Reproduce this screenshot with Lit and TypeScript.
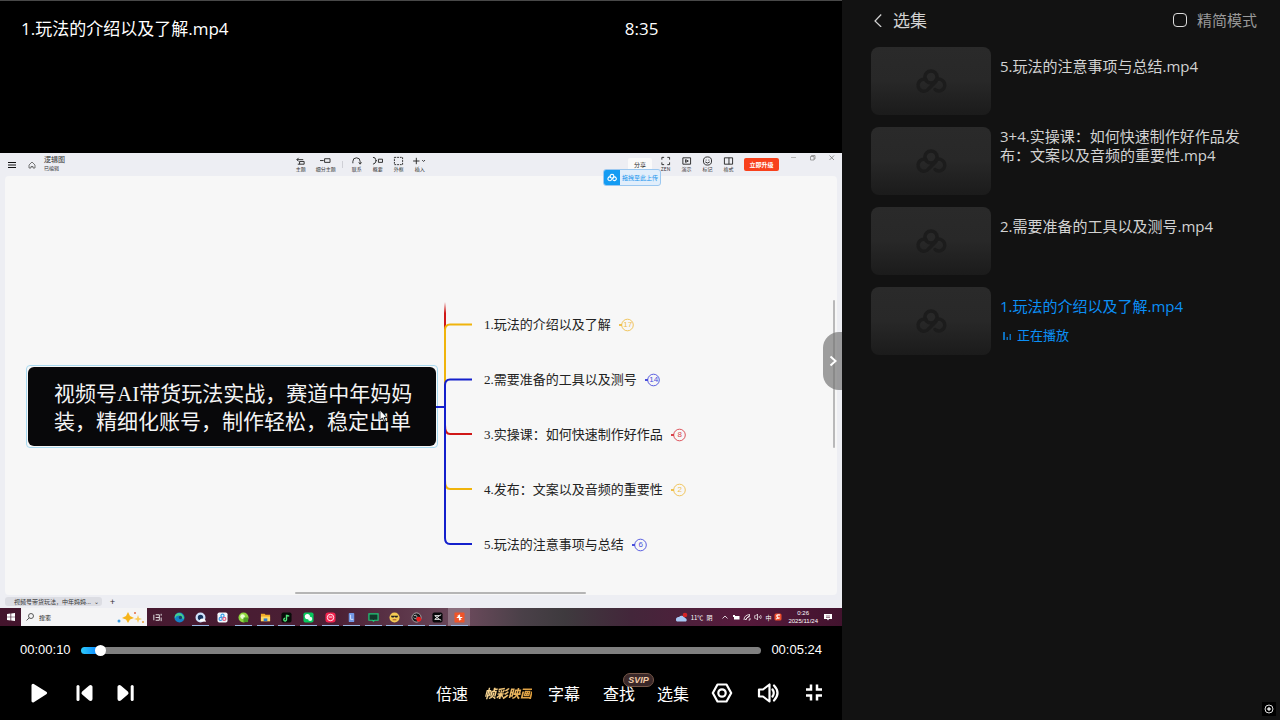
import { LitElement, html, css, svg } from "lit";
import { customElement, state } from "lit/decorators.js";
import { classMap } from "lit/directives/class-map.js";

const cloudLogo = (cls: string) => html`
  <svg class=${cls} viewBox="0 0 32 26" fill="none" stroke="currentColor" stroke-width="3.5" stroke-linecap="round" aria-hidden="true">
    <circle cx="16" cy="9" r="6.1" />
    <path d="M21 13.500 13.500 21A5.900 5.900 0 1 1 11 11.700" />
    <path d="M21.300 11.700A5.900 5.900 0 1 1 20 21.500" />
  </svg>`;

@customElement("mind-map")
class MindMap extends LitElement {
  static styles = css`
    :host { display: block; position: relative; flex: 1; margin: 0 5px; background: #f7f7f7; border-radius: 4px; overflow: hidden;
      color: #222; font-family: "Liberation Serif", "Noto Sans CJK SC", sans-serif; }
    .root { position: absolute; left: 21px; top: 189px; width: 412px; height: 83px; box-sizing: border-box; border: 1px solid #a9daf0; border-radius: 4px; padding: 1px; }
    .root p { margin: 0; height: 100%; box-sizing: border-box; display: flex; flex-direction: column; justify-content: center; background: #08080a; border-radius: 6px; padding: 3px 0 0 26px; color: #f4f4f4; font-size: 21px; line-height: 28px; white-space: nowrap; }
    .lines { position: absolute; left: 431px; top: 124px; width: 40px; height: 250px; }
    .topics { position: absolute; left: 479px; top: 139px; margin: 0; padding: 0; list-style: none; display: grid; gap: 35px; }
    .topic { display: flex; align-items: center; gap: 8px; height: 20px; font-size: 13px; line-height: 20px; white-space: nowrap; }
    .badge { position: relative; width: 15px; height: 14px; font: 8px/14px "Liberation Sans", sans-serif; color: var(--c); }
    .badge svg { position: absolute; inset: 0; }
    .badge span { display: block; padding-left: 3px; text-align: center; }
    .gold { --c: #efc04e; } .blue { --c: #4a4fdc; } .red { --c: #d9434c; }
    .vbar { position: absolute; right: 2px; top: 124px; width: 2px; height: 148px; border-radius: 1px; background: #b9b9ba; }
    .hbar { position: absolute; left: 290px; bottom: 1px; width: 291px; height: 2px; border-radius: 1px; background: #b5b5b5; }
    .cursor { position: absolute; left: 374px; top: 233px; width: 9px; height: 14px; }
  `;
  topics = [
    ["1.玩法的介绍以及了解", "17", "gold"],
    ["2.需要准备的工具以及测号", "14", "blue"],
    ["3.实操课：如何快速制作好作品", "8", "red"],
    ["4.发布：文案以及音频的重要性", "2", "gold"],
    ["5.玩法的注意事项与总结", "6", "blue"],
  ];
  render() {
    return html`
      <div class="root"><p><span>视频号AI带货玩法实战，赛道中年妈妈</span><span>装，精细化账号，制作轻松，稳定出单</span></p></div>
      <svg class="lines" viewBox="0 0 40 250" fill="none" stroke-width="2" aria-hidden="true">
        <defs><linearGradient id="f" x1="0" y1="0" x2="0" y2="1"><stop offset="0" stop-color="#d01818" stop-opacity="0" /><stop offset=".4" stop-color="#d01818" /></linearGradient></defs>
        <rect x="8" y="2" width="2" height="28" fill="url(#f)" />
        <path stroke="#f0b40c" d="M9 106V30Q9 24.500 14 24.500H36M9 180Q9 189 14 189H36" />
        <path stroke="#d01818" d="M9 125Q9 134 14 134H36" />
        <path stroke="#1420cc" d="M0 107H9M36 79.500H14Q9 79.500 9 85V238Q9 244 14 244H36" />
      </svg>
      <ul class="topics">
        ${this.topics.map(([t, n, c]) => html`<li class="topic"><span>${t}</span>
          <span class="badge ${c}"><svg viewBox="0 0 15 14" fill="none" stroke="currentColor" aria-hidden="true"><circle cx="8.500" cy="7" r="5.800" stroke-width=".9" /><path d="M0 7H3" stroke-width="2" /></svg><span>${n}</span></span></li>`)}
      </ul>
      <svg class="cursor" viewBox="0 0 9 14" aria-hidden="true"><path d="M1 1V11L3.500 9 5 12.500 6.500 12 5 8.500H8Z" fill="#fff" stroke="#111" stroke-width=".8" /></svg>
      <div class="vbar"></div><div class="hbar"></div>`;
  }
}

const tools: Record<string, unknown> = {
  topic: svg`<path d="M4 2 2 4 4 6M2 4H9M3 9H10V6H5V9"/>`,
  sub: svg`<path d="M0 5H4M5 3H11V7H5Z"/>`,
  link: svg`<path d="M2 8V6A4 4 0 0 1 10 6V8M8.500 7 10 9 11.500 7"/>`,
  sum: svg`<path d="M1 1.500Q4 1.500 4 4T5 5Q4 5 4 6.500T1 9M7 3.500H11.500V7H7Z"/>`,
  frame: svg`<rect x="1.500" y="1.500" width="9" height="8" stroke-dasharray="2 1"/>`,
  plus: svg`<path d="M-1 5.500H6M2.500 2V9M9 4.500 10.500 6 12 4.500"/>`,
  zen: svg`<path d="M2 4V1.500H4.500M8 1.500H10.500V4M10.500 7V9.500H8M4.500 9.500H2V7"/>`,
  show: svg`<path d="M2 2H10.500V9H2ZM5 4V7L8 5.500Z"/>`,
  mark: svg`<circle cx="6" cy="5.500" r="4.500"/><path d="M4 4.500H5M7 4.500H8M3.500 6.500Q6 9 8.500 6.500"/>`,
  format: svg`<path d="M1.500 2H10.500V9H1.500ZM6.500 2V9"/>`,
};

@customElement("desktop-screen")
class DesktopScreen extends LitElement {
  static styles = css`
    :host { display: flex; flex-direction: column; position: relative; background: #edeef3; color: #333; font-family: "Noto Sans CJK SC", sans-serif; }
    .bar { display: flex; height: 23px; flex: none; }
    .doc { width: 34%; display: flex; align-items: center; padding-left: 8px; box-sizing: border-box; gap: 12px; }
    .doc svg { width: 8px; height: 8px; }
    .doc div { display: grid; font-size: 5px; line-height: 8px; padding-bottom: 2px; margin-left: -4px; }
    .doc strong { font-size: 7px; font-weight: 400; line-height: 9px; }
    .mid { flex: 1; display: flex; padding-left: 4px; }
    .tool { width: 21px; display: flex; flex-direction: column; align-items: center; padding-top: 3px; font-size: 5px; line-height: 6px; white-space: nowrap; }
    .tool svg { width: 11px; height: 10px; overflow: visible; }
    .wide { width: 29px; }
    .sep { width: 1px; height: 7px; margin: 8px 3px 0 2px; background: #cfd0d6; }
    .right { display: flex; padding-right: 1px; }
    .share, .up { margin: 5px 3px 0 0; width: 24px; height: 13px; border: 0; border-radius: 2px; padding: 0; background: #fafafa; color: #222; font: 6px/13px "Noto Sans CJK SC", sans-serif; }
    .up { width: 35px; margin: 5px 5px 0; background: #f8411c; color: #fff; font-weight: 700; }
    .win { width: 19px; height: 9px; }
    .drop { position: absolute; left: 603px; top: 16px; width: 58px; height: 17px; box-sizing: border-box; border: 1px solid #9cc8f0; border-radius: 3px; display: flex; align-items: center; background: #e1eefb; color: #1a95ee; font-size: 6px; overflow: hidden; white-space: nowrap; gap: 2px; }
    .drop span { display: grid; place-items: center; width: 16px; height: 17px; background: #149cf3; color: #fff; }
    .cloud { width: 10px; height: 9px; }
    .tabs { height: 13px; flex: none; display: flex; align-items: center; padding-left: 5px; font-size: 6px; gap: 8px; }
    .tab { width: 85px; height: 9px; line-height: 9px; padding: 0 3px 0 9px; background: #dcdde3; border-radius: 3px; display: flex; justify-content: space-between; white-space: nowrap; }
    .tabs i { font-style: normal; font-size: 9px; }
    .task { height: 18px; flex: none; display: flex; background: linear-gradient(90deg, #43142c, #4b2035 40%, #6c4a5c 55%, #4a4048 62%, #3e3a3e 67%, #43263a 75%, #571a3c 88%, #42132e); color: #fff; }
    .start { width: 21px; display: grid; place-items: center; }
    .start svg { width: 8px; height: 8px; }
    .search { width: 126px; background: #f4f4f5; color: #222; display: flex; align-items: center; font-size: 6px; gap: 5px; padding: 0 2px 0 5px; box-sizing: border-box; }
    .search svg { width: 8px; height: 8px; }
    .search .spark { width: 28px; height: 13px; margin-left: auto; }
    .apps { width: 323px; display: flex; }
    .app { flex: 1; display: grid; place-items: center; }
    .app svg { width: 11px; height: 11px; }
    .open { background: linear-gradient(#9bb9e4, #9bb9e4) bottom / 17px 1px no-repeat; }
    .active { background-color: #8b6f7e; }
    .tray { flex: 1; display: flex; justify-content: flex-end; align-items: center; gap: 3px; font-size: 6px; padding-right: 10px; white-space: nowrap; }
    .tray svg { width: 8px; height: 8px; }
    .tray .weather { width: 12px; height: 11px; }
    .date { display: grid; font-size: 6px; line-height: 8px; text-align: center; margin: 0 3px; font-family: "Liberation Sans", sans-serif; }
    .gap { width: 3px; }
  `;
  tool(icon: string, label: string, cls = "") {
    return html`<span class="tool ${cls}"><svg viewBox="0 0 12 11" fill="none" stroke="#222" stroke-width="1">${tools[icon]}</svg>${label}</span>`;
  }
  apps = [
    svg`<path d="M2 3V9M4 3H8V9H4M4 6H8M10 2V4M10 6V10" stroke="#eee" fill="none"/>`,
    svg`<circle cx="6" cy="6" r="5.500" fill="#1482c8"/><path d="M1 7Q3 2 8 5Q8 8 11 7Q10 1 5 1Q0 2 1 7" fill="#45d08d"/><circle cx="7" cy="6" r="1.800" fill="#15436d"/>`,
    svg`<circle cx="6" cy="6" r="4.200" fill="#16355f" stroke="#cfe2fb" stroke-width="2.500"/><path d="M5 10Q5 7 8 7T12 10.500Z" fill="#fff"/>`,
    svg`<rect x=".5" y=".5" width="11" height="11" rx="2" fill="#f4f8fc"/><g fill="none" stroke="#3a9ee8" stroke-width="1.300"><circle cx="6" cy="4" r="1.700"/><circle cx="4" cy="7.500" r="1.700"/><circle cx="8" cy="7.500" r="1.700" stroke="#e26284"/></g>`,
    svg`<circle cx="6" cy="6" r="5.500" fill="#8fd63e"/><circle cx="5" cy="5" r="2.500" fill="#eaffd0"/><rect x="6" y="6" width="5" height="5" fill="#4d9d26"/>`,
    svg`<path d="M1 2H5L6 3H11V10H1Z" fill="#f3ad27"/><path d="M1 5H11V10H1Z" fill="#ffd968"/><rect x="4" y="7" width="4" height="3" fill="#2d7fd2"/>`,
    svg`<rect x=".5" y=".5" width="11" height="11" rx="2" fill="#080c08"/><path d="M6 3V8A1.500 1.500 0 1 1 4.500 6.800M6 3Q7 5 9 4" stroke="#51e87d" stroke-width="1.500" fill="none"/>`,
    svg`<rect x=".5" y=".5" width="11" height="11" rx="2" fill="#09c75e"/><circle cx="4.800" cy="5" r="2.800" fill="#fff"/><circle cx="7.800" cy="7.500" r="2.300" fill="#e8fff0"/>`,
    svg`<rect x=".5" y=".5" width="11" height="11" rx="3" fill="#f3234f"/><circle cx="6" cy="6" r="3.500" fill="none" stroke="#fff"/><path d="M4 5.500H8" stroke="#fff"/>`,
    svg`<rect x="3" y="1" width="6" height="10" rx="1" fill="#7297e3"/><path d="M5 3V8H8" stroke="#dce8ff" fill="none"/>`,
    svg`<path d="M1 2H11V9H7L6 10 5 9H1Z" fill="#12382b" stroke="#20c978" stroke-width="1.300"/>`,
    svg`<circle cx="6" cy="6" r="5.500" fill="#f4cb54"/><path d="M2 4H10L9 6H7L6 5 5 6H3Z" fill="#222"/><path d="M4 8.500H8" stroke="#a14324"/>`,
    svg`<circle cx="6" cy="6" r="5" fill="#1c1c1f" stroke="#c9c9c9" stroke-width=".8"/><path d="M3 4Q6 2 7 6Q4 9 3 6" fill="none" stroke="#bbb"/><circle cx="8.500" cy="8" r="2.700" fill="#f11c1c"/>`,
    svg`<rect x=".5" y=".5" width="11" height="11" rx="2" fill="#08080a"/><path d="M3 4H8L10 3M3 8H8L10 9M3 4 8 8M3 8 8 4" fill="none" stroke="#fff"/>`,
    svg`<rect x=".5" y=".5" width="11" height="11" rx="1" fill="#ef5429"/><path d="M3 6H5L6 3V9L7 6H9M4 4 8 8" fill="none" stroke="#fff" stroke-width="1.300"/>`,
  ];
  render() {
    return html`
      <div class="bar">
        <div class="doc">
          <svg viewBox="0 0 8 8" stroke="#111"><path d="M0 1.500H8M0 4H8M0 6.500H8" /></svg>
          <svg viewBox="0 0 8 8" fill="none" stroke="#555" stroke-width=".8"><path d="M1 4 4 1 7 4V7H5V5.500H3V7H1Z" /></svg>
          <div><strong>逻辑图</strong><span>已编辑</span></div>
        </div>
        <div class="mid">
          ${this.tool("topic", "主题")}${this.tool("sub", "细分主题", "wide")}<span class="sep"></span>
          ${this.tool("link", "联系")}${this.tool("sum", "概要")}${this.tool("frame", "外框")}${this.tool("plus", "插入")}
        </div>
        <div class="right">
          <button class="share">分享</button>
          ${this.tool("zen", "ZEN")}${this.tool("show", "演示")}${this.tool("mark", "标记")}${this.tool("format", "格式")}
          <button class="up">立即升级</button>
          <svg class="win" viewBox="0 0 19 9" stroke="#aaa" stroke-width=".8"><path d="M7 4.500H12" /></svg>
          <svg class="win" viewBox="0 0 19 9" fill="none" stroke="#888" stroke-width=".8"><path d="M7.500 3.500H11V7H7.500ZM8.500 3.500V2.500H12V6H11" /></svg>
          <svg class="win" viewBox="0 0 19 9" stroke="#777" stroke-width=".8"><path d="M7.500 2.500 12 7M12 2.500 7.500 7" /></svg>
        </div>
      </div>
      <mind-map></mind-map>
      <div class="tabs"><span class="tab"><span>视频号带货玩法，中年妈妈...</span><span>⌄</span></span><i>+</i></div>
      <div class="task">
        <span class="start"><svg viewBox="0 0 8 8" fill="#fff"><path d="M0 1 3.500.5V3.700H0ZM4.200.4 8 0V3.700H4.200ZM0 4.300H3.500V7.500L0 7ZM4.200 4.300H8V8L4.200 7.600Z" /></svg></span>
        <span class="search"><svg viewBox="0 0 8 8" fill="none" stroke="#333" stroke-width=".8"><circle cx="5" cy="3" r="2.500" /><path d="M3.200 4.800.5 7.500" /></svg>搜索
          <svg class="spark" viewBox="0 0 28 13"><path d="M11 1 13 5 17 7 13 8.500 11 12 9 8.500 5 7 9 5Z" fill="#f6b41a" /><path d="M21 4 22 7 25 8 22 9 21 12 20 9 17 8 20 7Z" fill="#f9cb58" /><circle cx="2" cy="10" r="1.500" fill="#3b9be0" /><circle cx="18" cy="2" r="1" fill="#e46b43" /><circle cx="26" cy="11" r="1" fill="#e5a03d" /></svg>
        </span>
        <span class="apps">${this.apps.map((a, i) => html`<span class=${classMap({ app: true, open: i === 2 || i > 3, active: i === 14 })}><svg viewBox="0 0 12 12">${a}</svg></span>`)}</span>
        <span class="tray">
          <svg class="weather" viewBox="0 0 12 11"><path d="M1 9.500A2.500 2.500 0 0 1 3 5 3.500 3.500 0 0 1 9 6 2 2 0 0 1 10 9.500Z" fill="#a9c9f4" /><circle cx="9" cy="3" r="2.300" fill="#d52425" /></svg>
          <span>11℃</span><span>阴</span><span class="gap"></span>
          <svg viewBox="0 0 8 8" fill="none" stroke="#fff" stroke-width=".8"><path d="M1.500 5.500 4 3 6.500 5.500" /></svg>
          <svg viewBox="0 0 8 8" fill="#fff"><path d="M1 2H3V3H7.500V6.500H2V4H1Z" /></svg>
          <svg viewBox="0 0 8 8" fill="none" stroke="#fff" stroke-width=".8"><path d="M1 7Q1 2 7 1.500M3 7Q3 4 7 3.500M2 7 7 2M5.500 7H7V5" /></svg>
          <svg viewBox="0 0 8 8" fill="none" stroke="#fff" stroke-width=".7"><path d="M0 3H1.500L3.500 1V7L1.500 5H0ZM5 3Q6 4 5 5M6.500 2Q8 4 6.500 6" /></svg>
          <span>中</span>
          <svg viewBox="0 0 8 8"><rect x=".5" y=".5" width="7" height="7" rx="1.500" fill="#ee4f2d" /><path d="M6 2Q2 1.500 3 3.500T5 5 2 6" fill="none" stroke="#fff" stroke-width="1.200" /></svg>
          <span class="date"><span>0:26</span><span>2025/11/24</span></span>
          <svg viewBox="0 0 8 8"><path d="M0 1H8V6H5L4 7.500 3 6H0Z" fill="#fff" /><path d="M2 3H6M2 4.500H6" stroke="#55213d" stroke-width=".6" /></svg>
        </span>
      </div>
      <div class="drop"><span>${cloudLogo("cloud")}</span>拖拽至此上传</div>`;
  }
}

@customElement("video-player")
class VideoPlayer extends LitElement {
  static styles = css`
    :host { display: flex; flex-direction: column; position: relative; min-width: 0; background: #000; color: #fff; border-top: 1px solid #484848; box-sizing: border-box; font-family: "Open Sans", "Noto Sans CJK SC", sans-serif; }
    header { flex: 1; display: grid; grid-template-columns: 3fr 1fr; align-items: start; padding: 16px 16px 0 21px; font-size: 17px; line-height: 24px; }
    h1 { margin: 0; font: inherit; }
    desktop-screen { aspect-ratio: 842 / 473; flex: none; }
    footer { height: 94px; flex: none; }
    .seek { display: flex; align-items: center; gap: 10px; padding: 14px 20px 0 20px; height: 20px; font: 13px/20px "Liberation Sans", sans-serif; }
    .seek input { flex: 1; min-width: 0; height: 12px; margin: 0; appearance: none; background: none; }
    .seek input::-webkit-slider-runnable-track { height: 7px; border-radius: 4px; background: linear-gradient(90deg, #2ecbfb, #0a84ff 18px, #0a84ff 20px, #808080 20px); }
    .seek input::-webkit-slider-thumb { appearance: none; width: 11px; height: 11px; margin-top: -2px; border-radius: 50%; background: #fff; }
    .controls { display: flex; align-items: center; height: 32px; padding: 17px 18px 0 29px; }
    button { border: 0; padding: 0; background: none; color: inherit; font: 16px/24px "Noto Sans CJK SC", sans-serif; display: flex; position: relative; white-space: nowrap; }
    .group { display: flex; align-items: center; }
    .transport { gap: 21px; }
    .words { gap: 16px; margin-left: auto; }
    .more { gap: 22px; margin-left: 23px; }
    .icons { gap: 23px; margin-left: 21px; }
    .icon { width: 20px; height: 20px; }
    .mid { width: 24px; height: 24px; }
    .gold { font-size: 12px; font-weight: 900; font-style: italic; background: linear-gradient(90deg, #fbdc9c, #dd9c3a); background-clip: text; color: transparent; }
    .svip { position: absolute; left: 20px; top: -8px; width: 31px; height: 14px; box-sizing: border-box; border: 1px solid #765748; border-radius: 7px; background: #3a2829; color: #f2cda9; font: italic 700 9px/12px "Liberation Sans", sans-serif; text-align: center; }
    .fold { position: absolute; right: 0; top: 331px; width: 19px; height: 58px; border-radius: 16px 0 0 16px; background: rgb(118 118 118 / 70%); align-items: center; justify-content: center; }
    .fold svg { width: 8px; height: 12px; }
  `;
  render() {
    return html`
      <header><h1>1.玩法的介绍以及了解.mp4</h1><span>8:35</span></header>
      <desktop-screen></desktop-screen>
      <footer>
        <div class="seek"><span>00:00:10</span><input type="range" aria-label="播放进度" min="0" max="324" .value=${"7"} /><span>00:05:24</span></div>
        <div class="controls">
          <div class="group transport">
            <button aria-label="播放"><svg class="icon" viewBox="0 0 20 20"><path d="M4 2.200 16.500 10 4 18Z" fill="#fff" stroke="#fff" stroke-width="3" stroke-linejoin="round" /></svg></button>
            <button aria-label="上一个"><svg class="mid" viewBox="0 0 24 24" fill="#fff" stroke="#fff" stroke-linejoin="round" stroke-linecap="round"><path d="M8 5.500V18.500" stroke-width="3" /><path d="M20.500 6V18L13.500 12Z" stroke-width="4" /></svg></button>
            <button aria-label="下一个"><svg class="mid" viewBox="0 0 24 24" fill="#fff" stroke="#fff" stroke-linejoin="round" stroke-linecap="round"><path d="M17.200 5.500V18.500" stroke-width="3" /><path d="M4.500 6V18L11.500 12Z" stroke-width="4" /></svg></button>
          </div>
          <div class="group words"><button>倍速</button><button class="gold">帧彩映画</button><button>字幕</button></div>
          <div class="group more"><button>查找<span class="svip">SVIP</span></button><button>选集</button></div>
          <div class="group icons">
            <button aria-label="设置"><svg class="mid" viewBox="0 0 24 24" fill="none" stroke="#fff" stroke-width="2.200" stroke-linejoin="round"><path d="M7.500 3.500H16.500L21.200 12 16.500 20.500H7.500L2.800 12Z" /><circle cx="12" cy="12" r="3.700" /></svg></button>
            <button aria-label="音量"><svg class="mid" viewBox="0 0 24 24" fill="none" stroke="#fff" stroke-width="2.200" stroke-linejoin="round" stroke-linecap="round"><path d="M2 8.500H6L12.500 3.500V20.500L6 15.500H2Z" /><path d="M15.500 8.500Q18 12 15.500 15.500M17 4.500Q24 12 17 19.500" /></svg></button>
            <button aria-label="退出全屏"><svg class="icon" viewBox="0 0 20 20" fill="none" stroke="#fff" stroke-width="2.500"><path d="M2 6.500H7V1.500M13 1.500V6.500H18M18 12.500H13V17.500M7 17.500V12.500H2" /></svg></button>
          </div>
        </div>
      </footer>
      <button class="fold" aria-label="收起"><svg viewBox="0 0 8 12" fill="none" stroke="#fff" stroke-width="2"><path d="M1.500 1.500 6.500 6 1.500 10.500" /></svg></button>`;
  }
}

@customElement("episode-list")
class EpisodeList extends LitElement {
  static styles = css`
    :host { display: block; background: #121212; color: #d2d2d2; font-family: "Open Sans", "Noto Sans CJK SC", sans-serif; padding: 0 23px 0 29px; position: relative; }
    header { display: flex; align-items: center; height: 40px; margin-bottom: 7px; }
    .back { border: 0; background: none; padding: 0; color: inherit; display: flex; align-items: center; gap: 11px; font: 17px/24px "Noto Sans CJK SC", sans-serif; padding-left: 3px; }
    .back svg { width: 8px; height: 14px; }
    label { margin-left: auto; display: flex; align-items: center; gap: 10px; font-size: 15px; line-height: 20px; color: #999; }
    label input { appearance: none; width: 14px; height: 14px; margin: 0; border: 1px solid #ddd; border-radius: 4px; }
    ul { margin: 0; padding: 0; list-style: none; display: grid; gap: 12px; }
    .item { display: flex; gap: 9px; color: inherit; text-decoration: none; }
    .thumb { flex: none; width: 120px; height: 68px; border-radius: 8px; display: grid; place-items: center; background: linear-gradient(#2a2a2a, #282828 50%, #1b1b1b); color: #1c1c1c; }
    .logo { width: 32px; height: 26px; }
    .title { display: flex; align-items: center; height: 38px; font-size: 15px; line-height: 19px; }
    .text { padding-right: 10px; }
    .current { color: #0b8ff5; }
    .state { display: flex; align-items: center; gap: 5px; height: 20px; font-size: 13px; line-height: 20px; padding-left: 3px; }
    .state svg { width: 9px; height: 9px; }
    .corner { position: absolute; right: 4px; bottom: 4px; width: 14px; height: 14px; border: 0; padding: 0; background: #000; display: grid; place-items: center; }
    .corner svg { width: 10px; height: 10px; }
  `;
  @state() current = 3;
  episodes = ["5.玩法的注意事项与总结.mp4", "3+4.实操课：如何快速制作好作品发布：文案以及音频的重要性.mp4", "2.需要准备的工具以及测号.mp4", "1.玩法的介绍以及了解.mp4"];
  render() {
    return html`
      <header>
        <button class="back"><svg viewBox="0 0 8 14" fill="none" stroke="currentColor" stroke-width="1.200"><path d="M7.200 1.500 1 8 7.200 14" /></svg>选集</button>
        <label><input type="checkbox" />精简模式</label>
      </header>
      <ul>
        ${this.episodes.map((e, i) => html`<li><a class=${classMap({ item: true, current: i === this.current })} href="#">
          <span class="thumb">${cloudLogo("logo")}</span>
          <span class="text"><span class="title">${e}</span>
            ${i === this.current ? html`<span class="state"><svg viewBox="0 0 9 9" fill="currentColor"><path d="M0 1H2V9H0ZM3.500 6H5V9H3.500ZM6.500 3H8V9H6.500Z" opacity=".75" /></svg>正在播放</span>` : ""}
          </span></a></li>`)}
      </ul>
      <button class="corner" aria-label="定位"><svg viewBox="0 0 10 10" fill="none" stroke="#ddd"><circle cx="5" cy="5" r="4" /><circle cx="5" cy="5" r="1.300" fill="#ddd" /></svg></button>`;
  }
}

@customElement("app-root")
class AppRoot extends LitElement {
  static styles = css`
    :host { display: grid; grid-template-columns: minmax(0, 1fr) 438px; min-height: 100vh; }
    episode-list { box-sizing: border-box; }
  `;
  render() {
    return html`<video-player></video-player><episode-list></episode-list>`;
  }
}
